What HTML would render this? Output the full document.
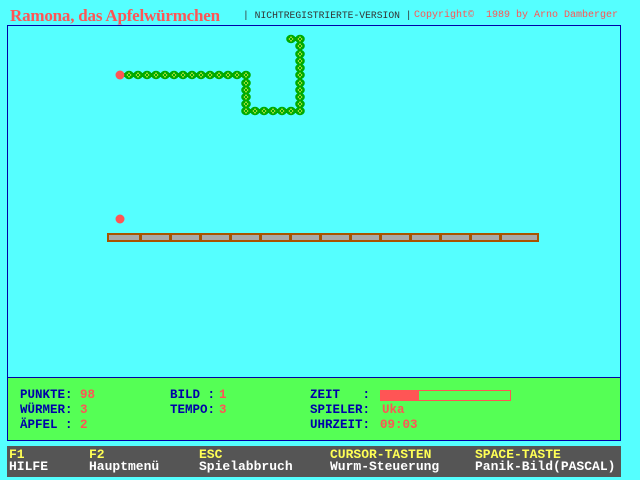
<!DOCTYPE html>
<html><head><meta charset="utf-8"><style>
body{margin:0;width:640px;height:480px;background:#55ffff;position:relative;overflow:hidden;font-family:"Liberation Mono",monospace;}
.a{position:absolute;white-space:pre;line-height:1;}
.t{font-family:"Liberation Serif",serif;font-weight:bold;color:#ff5555;font-size:17px;left:10px;top:7px;letter-spacing:-0.2px;}
.h{top:11px;}
.frame{position:absolute;left:7px;top:25px;width:612px;height:414px;border:1px solid #0000aa;}
.green{position:absolute;left:7px;top:377px;width:612px;height:62px;border:1px solid #0000aa;background:#55ff55;}
.p{font-size:12.5px;font-weight:bold;color:#0000aa;}
.v{font-size:12.5px;font-weight:bold;color:#ff5555;}
.bar{position:absolute;left:7px;top:446px;width:614px;height:31px;background:#555555;}
.y{font-size:13px;font-weight:bold;color:#ffff55;top:448px;}
.w{font-size:13px;font-weight:bold;color:#ffffff;top:460px;}
</style></head><body>
<div class="a t">Ramona, das Apfelwürmchen</div>
<div class="a h" style="left:243px;color:#333;font-size:9.7px;">| NICHTREGISTRIERTE-VERSION |</div>
<div class="a h" style="left:414px;color:#ff5555;font-size:10px;">Copyright©  1989 by Arno Damberger</div>
<div class="frame"></div>
<svg class="a" style="left:0;top:0" width="640" height="480">
<defs><g id="s"><ellipse cx="0" cy="0" rx="4.8" ry="4.2" fill="#00aa00"/><rect x="-0.6" y="-2.4" width="1.2" height="1.4" fill="#ffff55"/><rect x="-0.6" y="1" width="1.2" height="1.4" fill="#ffff55"/><rect x="-2.2" y="-0.6" width="1.2" height="1.2" fill="#ffff55"/><rect x="1" y="-0.6" width="1.2" height="1.2" fill="#ffff55"/></g></defs>
<polyline points="120,75 246,75 246,111 300,111 300,39 291,39" fill="none" stroke="#00aa00" stroke-width="4"/>
<circle cx="120" cy="75" r="4.5" fill="#ff5555"/>
<use href="#s" x="129" y="75"/><use href="#s" x="138" y="75"/><use href="#s" x="147" y="75"/><use href="#s" x="156" y="75"/><use href="#s" x="165" y="75"/><use href="#s" x="174" y="75"/><use href="#s" x="183" y="75"/><use href="#s" x="192" y="75"/><use href="#s" x="201" y="75"/><use href="#s" x="210" y="75"/><use href="#s" x="219" y="75"/><use href="#s" x="228" y="75"/><use href="#s" x="237" y="75"/><use href="#s" x="246" y="75"/>
<use href="#s" x="246" y="83"/><use href="#s" x="246" y="90"/><use href="#s" x="246" y="97"/><use href="#s" x="246" y="104"/>
<use href="#s" x="246" y="111"/><use href="#s" x="255" y="111"/><use href="#s" x="264" y="111"/><use href="#s" x="273" y="111"/><use href="#s" x="282" y="111"/><use href="#s" x="291" y="111"/><use href="#s" x="300" y="111"/>
<use href="#s" x="300" y="104"/><use href="#s" x="300" y="97"/><use href="#s" x="300" y="90"/><use href="#s" x="300" y="83"/><use href="#s" x="300" y="75"/><use href="#s" x="300" y="68"/><use href="#s" x="300" y="61"/><use href="#s" x="300" y="54"/><use href="#s" x="300" y="46"/><use href="#s" x="300" y="39"/><use href="#s" x="291" y="39"/>
<circle cx="120" cy="219" r="4.5" fill="#ff5555"/>
<rect x="107" y="233" width="432" height="9" fill="#a85400"/>
<g fill="#a8a8a8">
<rect x="109" y="235" width="30" height="5"/><rect x="142" y="235" width="27" height="5"/><rect x="172" y="235" width="27" height="5"/><rect x="202" y="235" width="27" height="5"/><rect x="232" y="235" width="27" height="5"/><rect x="262" y="235" width="27" height="5"/><rect x="292" y="235" width="27" height="5"/><rect x="322" y="235" width="27" height="5"/><rect x="352" y="235" width="27" height="5"/><rect x="382" y="235" width="27" height="5"/><rect x="412" y="235" width="27" height="5"/><rect x="442" y="235" width="27" height="5"/><rect x="472" y="235" width="27" height="5"/><rect x="502" y="235" width="35" height="5"/>
</g>
</svg>
<div class="green"></div>
<div class="a p" style="left:20px;top:389px">PUNKTE:</div><div class="a v" style="left:80px;top:389px">98</div>
<div class="a p" style="left:20px;top:404px">WÜRMER:</div><div class="a v" style="left:80px;top:404px">3</div>
<div class="a p" style="left:20px;top:419px">ÄPFEL :</div><div class="a v" style="left:80px;top:419px">2</div>
<div class="a p" style="left:170px;top:389px">BILD :</div><div class="a v" style="left:219px;top:389px">1</div>
<div class="a p" style="left:170px;top:404px">TEMPO:</div><div class="a v" style="left:219px;top:404px">3</div>
<div class="a p" style="left:310px;top:389px">ZEIT   :</div>
<div class="a" style="left:380px;top:390px;width:129px;height:9px;border:1px solid #ff5555;"></div>
<div class="a" style="left:380px;top:390px;width:39px;height:11px;background:#ff5555;"></div>
<div class="a p" style="left:310px;top:404px">SPIELER:</div><div class="a v" style="left:382px;top:404px">Uka</div>
<div class="a p" style="left:310px;top:419px">UHRZEIT:</div><div class="a v" style="left:380px;top:419px">09:03</div>
<div class="bar"></div>
<div class="a y" style="left:9px">F1</div><div class="a w" style="left:9px">HILFE</div>
<div class="a y" style="left:89px">F2</div><div class="a w" style="left:89px">Hauptmenü</div>
<div class="a y" style="left:199px">ESC</div><div class="a w" style="left:199px">Spielabbruch</div>
<div class="a y" style="left:330px">CURSOR-TASTEN</div><div class="a w" style="left:330px">Wurm-Steuerung</div>
<div class="a y" style="left:475px">SPACE-TASTE</div><div class="a w" style="left:475px">Panik-Bild(PASCAL)</div>
</body></html>
